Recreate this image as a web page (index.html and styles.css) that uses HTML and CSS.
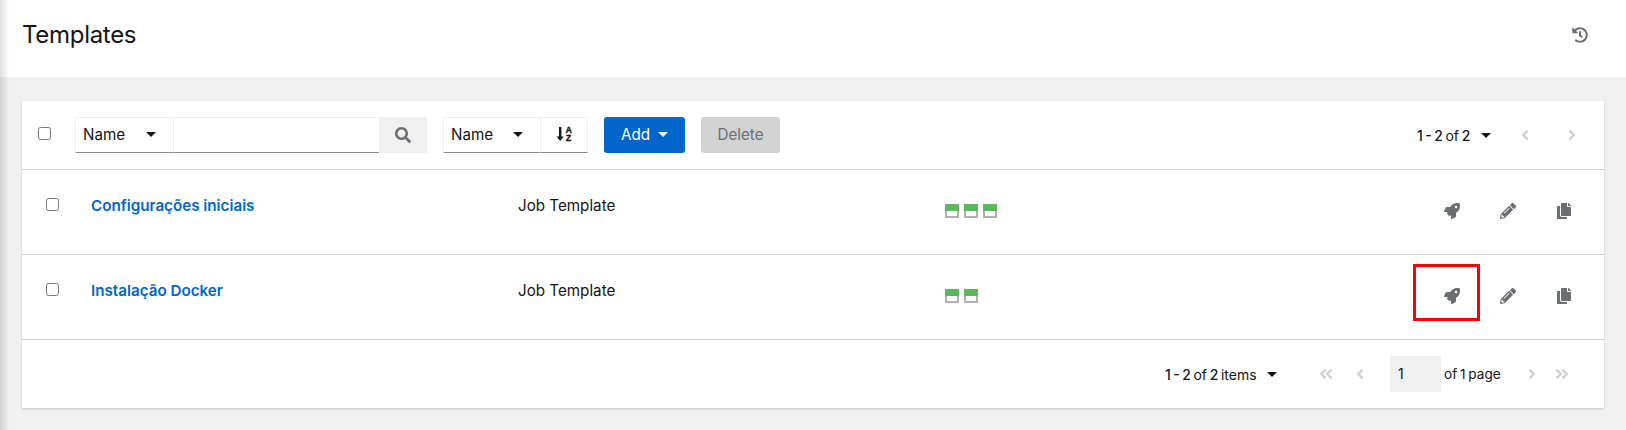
FILE: index.html
```html
<!DOCTYPE html>
<html lang="en">
<head>
<meta charset="utf-8">
<title>Templates</title>
<link rel="stylesheet" href="styles.css">
</head>
<body>
<svg class="defs" width="0" height="0" aria-hidden="true">
  <symbol id="i-rocket" viewBox="0 0 512 512"><path d="M505.12 19.09c-1.19-5.53-6.66-11-12.21-12.19C460.72 0 435.51 0 410.41 0 307.18 0 245.27 55.2 199.05 128H94.84c-16.35.02-35.56 11.88-42.89 26.48L2.52 253.3A28.4 28.4 0 0 0 0 264a24 24 0 0 0 24 24h103.81l-22.47 22.47c-11.37 11.36-13 32.26 0 45.25l50.9 50.91c11.16 11.19 32.16 13.16 45.28 0L224 384.16V488a24 24 0 0 0 24 24 28.56 28.56 0 0 0 10.71-2.52l98.73-49.39c14.63-7.3 26.51-26.5 26.51-42.86V312.8c72.6-46.31 128.03-108.41 128.03-211.1.1-25.2.1-50.4-6.86-82.61zM384.04 168a40 40 0 1 1 40.01-40 40.02 40.02 0 0 1-40.01 40z"/></symbol>
  <symbol id="i-pencil" viewBox="0 0 512 512"><path d="M497.9 142.1l-46.1 46.1c-4.7 4.7-12.3 4.7-17 0l-111-111c-4.7-4.7-4.7-12.3 0-17l46.1-46.1c18.7-18.7 49.1-18.7 67.9 0l60.1 60.1c18.8 18.7 18.8 49.1 0 67.9zM284.2 99.8L21.6 362.4.4 483.9c-2.9 16.4 11.4 30.6 27.8 27.8l121.5-21.3 262.6-262.6c4.7-4.7 4.7-12.3 0-17l-111-111c-4.8-4.7-12.4-4.7-17.1 0zM124.1 339.9c-5.5-5.5-5.5-14.3 0-19.8l154-154c5.5-5.5 14.3-5.5 19.8 0s5.5 14.3 0 19.8l-154 154c-5.5 5.5-14.3 5.5-19.8 0zM88 424h48v36.3l-64.5 11.3-31.1-31.1L51.7 376H88v48z"/></symbol>
  <symbol id="i-copy" viewBox="0 0 448 512"><path d="M320 448v40c0 13.255-10.745 24-24 24H24c-13.255 0-24-10.745-24-24V120c0-13.255 10.745-24 24-24h72v296c0 30.879 25.121 56 56 56h168zm0-344V0H152c-13.255 0-24 10.745-24 24v368c0 13.255 10.745 24 24 24h272c13.255 0 24-10.745 24-24V128H344c-13.2 0-24-10.8-24-24zm120.971-31.029L375.029 7.029A24 24 0 0 0 358.059 0H352v96h96v-6.059a24 24 0 0 0-7.029-16.97z"/></symbol>
  <symbol id="i-search" viewBox="0 0 512 512"><path d="M505 442.7L405.3 343c-4.5-4.5-10.6-7-17-7H372c27.6-35.3 44-79.7 44-128C416 93.1 322.9 0 208 0S0 93.1 0 208s93.1 208 208 208c48.3 0 92.7-16.4 128-44v16.3c0 6.4 2.5 12.5 7 17l99.7 99.7c9.4 9.4 24.6 9.4 33.9 0l28.3-28.3c9.4-9.4 9.4-24.6.1-34zM208 336c-70.7 0-128-57.2-128-128 0-70.7 57.2-128 128-128 70.7 0 128 57.2 128 128 0 70.7-57.2 128-128 128z"/></symbol>
  <symbol id="i-history" viewBox="0 0 512 512"><path d="M504 255.531c.253 136.64-111.18 248.372-247.82 248.468-59.015.042-113.223-20.53-155.822-54.911-11.077-8.94-11.905-25.541-1.839-35.607l11.267-11.267c8.609-8.609 22.353-9.551 31.891-1.984C173.062 425.135 212.781 440 256 440c101.705 0 184-82.311 184-184 0-101.705-82.311-184-184-184-48.814 0-93.149 18.969-126.068 49.932l50.754 50.754c10.08 10.08 2.941 27.314-11.313 27.314H24c-8.837 0-16-7.163-16-16V38.627c0-14.254 17.234-21.393 27.314-11.314l49.372 49.372C129.209 34.136 189.552 8 256 8c136.81 0 247.747 110.78 248 247.531zm-180.912 78.784l9.823-12.63c8.138-10.463 6.253-25.542-4.21-33.679L288 256.349V152c0-13.255-10.745-24-24-24h-16c-13.255 0-24 10.745-24 24v135.651l65.409 50.874c10.463 8.137 25.541 6.253 33.679-4.21z"/></symbol>
  <symbol id="i-left" viewBox="0 0 256 512"><path d="M31.7 239l136-136c9.4-9.4 24.6-9.4 33.9 0l22.6 22.6c9.4 9.4 9.4 24.6 0 33.9L127.9 256l96.4 96.4c9.4 9.4 9.4 24.6 0 33.9L201.7 409c-9.4 9.4-24.6 9.4-33.9 0l-136-136c-9.5-9.4-9.5-24.6-.1-34z"/></symbol>
  <symbol id="i-right" viewBox="0 0 256 512"><path d="M224.3 273l-136 136c-9.4 9.4-24.6 9.4-33.9 0l-22.6-22.6c-9.4-9.4-9.4-24.6 0-33.9l96.4-96.4-96.4-96.4c-9.4-9.4-9.4-24.6 0-33.9L54.3 103c9.4-9.4 24.6-9.4 33.9 0l136 136c9.5 9.4 9.5 24.6.1 34z"/></symbol>
  <symbol id="i-dleft" viewBox="0 0 448 512"><path d="M223.7 239l136-136c9.4-9.4 24.6-9.4 33.9 0l22.6 22.6c9.4 9.4 9.4 24.6 0 33.9L319.9 256l96.4 96.4c9.4 9.4 9.4 24.6 0 33.9L393.7 409c-9.4 9.4-24.6 9.4-33.9 0l-136-136c-9.5-9.4-9.5-24.6-.1-34zM31.7 239l136-136c9.4-9.4 24.6-9.4 33.9 0l22.6 22.6c9.4 9.4 9.4 24.6 0 33.9L127.9 256l96.4 96.4c9.4 9.4 9.4 24.6 0 33.9L201.7 409c-9.4 9.4-24.6 9.4-33.9 0l-136-136c-9.5-9.4-9.5-24.6-.1-34z"/></symbol>
  <symbol id="i-dright" viewBox="0 0 448 512"><path d="M224.3 273l-136 136c-9.4 9.4-24.6 9.4-33.9 0l-22.6-22.6c-9.4-9.4-9.4-24.6 0-33.9l96.4-96.4-96.4-96.4c-9.4-9.4-9.4-24.6 0-33.9L54.3 103c9.4-9.4 24.6-9.4 33.9 0l136 136c9.5 9.4 9.5 24.6.1 34zM416.3 273l-136 136c-9.4 9.4-24.6 9.4-33.9 0l-22.6-22.6c-9.4-9.4-9.4-24.6 0-33.9l96.4-96.4-96.4-96.4c-9.4-9.4-9.4-24.6 0-33.9l22.5-22.7c9.4-9.4 24.6-9.4 33.9 0l136 136c9.5 9.4 9.5 24.6.1 34z"/></symbol>
</svg>
<div class="side-shadow"></div>
<header class="page-header">
  <h1 class="title">Templates</h1>
  <svg class="history"><use href="#i-history"/></svg>
</header>
<main class="content">
  <section class="card">
    <div class="toolbar">
      <input type="checkbox" class="check-all">
      <div class="select sel-search"><span>Name</span><i class="caret"></i></div>
      <div class="search-input"></div>
      <div class="search-btn"><svg class="ic-search"><use href="#i-search"/></svg></div>
      <div class="select sel-sort"><span>Name</span><i class="caret"></i></div>
      <div class="sort-btn">
        <svg class="ic-sort" viewBox="0 0 17 16">
          <path d="M3 1h2.400v9.500h2.400L4.200 15 .6 10.500H3z"/>
          <text x="9.500" y="7" class="sort-letter">A</text>
          <text x="9.800" y="15" class="sort-letter">Z</text>
        </svg>
      </div>
      <button class="btn btn-add">Add<i class="caret caret-white"></i></button>
      <button class="btn btn-delete">Delete</button>
      <div class="top-pager">
        <span class="count count-top"><b>1 - 2</b> of <b>2</b></span><i class="caret"></i>
        <svg class="ang ang-top-l"><use href="#i-left"/></svg>
        <svg class="ang ang-top-r"><use href="#i-right"/></svg>
      </div>
    </div>
    <div class="row">
      <input type="checkbox" class="row-check">
      <a class="name">Configurações iniciais</a>
      <span class="type">Job Template</span>
      <div class="spark"><i class="bar"></i><i class="bar"></i><i class="bar"></i></div>
      <div class="actions">
        <svg class="ic-rocket"><use href="#i-rocket"/></svg>
        <svg class="ic-pencil"><use href="#i-pencil"/></svg>
        <svg class="ic-copy"><use href="#i-copy"/></svg>
      </div>
    </div>
    <div class="row">
      <input type="checkbox" class="row-check">
      <a class="name">Instalação Docker</a>
      <span class="type">Job Template</span>
      <div class="spark"><i class="bar"></i><i class="bar"></i></div>
      <div class="actions">
        <svg class="ic-rocket"><use href="#i-rocket"/></svg>
        <svg class="ic-pencil"><use href="#i-pencil"/></svg>
        <svg class="ic-copy"><use href="#i-copy"/></svg>
        <div class="highlight"></div>
      </div>
    </div>
    <div class="footer">
      <span class="count count-bottom"><b>1 - 2</b> of <b>2</b> items</span><i class="caret"></i>
      <svg class="ang-d ang-first"><use href="#i-dleft"/></svg>
      <svg class="ang ang-prev"><use href="#i-left"/></svg>
      <div class="page-box">1</div>
      <span class="of-page">of 1 page</span>
      <svg class="ang ang-next"><use href="#i-right"/></svg>
      <svg class="ang-d ang-last"><use href="#i-dright"/></svg>
    </div>
  </section>
</main>
</body>
</html>
```
FILE: styles.css
```css
* { box-sizing: border-box; }
html, body { height: 100%; }
body {
  margin: 0;
  background: #f0f0f0;
  font-family: "Inter", "Liberation Sans", sans-serif;
  font-size: 15.2px;
  color: #151515;
  overflow: hidden;
  position: relative;
}
.defs { position: absolute; }
.side-shadow {
  position: absolute;
  left: 0; top: 0; bottom: 0;
  width: 9px;
  background: linear-gradient(to right, rgba(0,0,0,.13), rgba(0,0,0,0));
}
.page-header {
  height: 77px;
  background: #fff;
  display: flex;
  align-items: center;
  justify-content: space-between;
  padding: 0 38px 8px 22px;
}
.title { margin: 0; font-size: 24px; font-weight: 400; color: #151515; letter-spacing: -.3px; }
.history { width: 16px; height: 16px; fill: #6a6e73; }
.content { padding: 24px 22px 0; }
.card {
  position: relative;
  background: #fff;
  box-shadow: 0 1px 2px rgba(3,3,3,.16);
}
.toolbar {
  height: 69px;
  display: flex;
  align-items: center;
  padding: 0 0 0 16px;
  border-bottom: 1px solid #d2d2d2;
}
.check-all { margin: 0 0 4px; width: 13px; height: 13px; flex: none; }
.select {
  height: 36px;
  display: flex;
  align-items: center;
  justify-content: space-between;
  padding: 0 17px 2px 7px;
  border: 1px solid #f0f0f0;
  border-bottom-color: #8a8d90;
  flex: none;
}
.sel-search { margin-left: 24px; width: 99px; }
.sel-sort { margin-left: 16px; width: 98px; }
.search-input {
  width: 205px;
  height: 36px;
  border-top: 1px solid #f0f0f0;
  border-bottom: 1px solid #8a8d90;
  flex: none;
}
.search-btn {
  width: 48px; height: 36px;
  background: #f0f0f0;
  display: flex; align-items: center; justify-content: center;
  flex: none;
}
.ic-search { width: 16px; height: 16px; fill: #6a6e73; }
.sort-btn {
  width: 47px; height: 36px;
  border: 1px solid #f0f0f0;
  border-left: 0;
  border-bottom-color: #8a8d90;
  display: flex; align-items: center; justify-content: center;
  flex: none;
}
.ic-sort { width: 17px; height: 16px; fill: #151515; margin-bottom: 2px; }
.sort-letter { font-size: 9px; font-weight: 700; font-family: "Liberation Sans", sans-serif; stroke: #151515; stroke-width: .3px; }
.caret {
  display: inline-block;
  width: 0; height: 0;
  border-left: 5px solid transparent;
  border-right: 5px solid transparent;
  border-top: 5.500px solid #151515;
  flex: none;
}
.caret-white { border-top-color: #fff; margin-left: 8px; }
.btn {
  height: 36px;
  border: 0;
  border-radius: 3px;
  font: inherit;
  padding: 0 0 2px;
  flex: none;
  display: flex; align-items: center; justify-content: center;
}
.btn-add { width: 81px; margin-left: 16px; background: #06c; color: #fff; }
.btn-delete { width: 79px; margin-left: 16px; background: #d2d2d2; color: #6a6e73; }
.top-pager { margin-left: auto; display: flex; align-items: center; }
.count {
  color: #151515;
  font-size: 14px;
  word-spacing: -1.300px;
  white-space: nowrap;
  flex: none;
}
.count b { font-weight: 500; }
.count-top { width: 64px; }
.count-bottom { width: 102px; }
.ang { width: 8px; height: 16px; fill: #d2d2d2; flex: none; }
.ang-d { width: 14px; height: 16px; fill: #d2d2d2; flex: none; }
.ang-top-l { margin-left: 30px; }
.ang-top-r { margin-left: 39px; margin-right: 28px; }
.row {
  height: 85px;
  padding: 0 0 2px 24px;
  display: flex;
  align-items: center;
  border-bottom: 1px solid #d2d2d2;
}
.row-check { margin: 0 0 13px; width: 13px; height: 13px; flex: none; }
.name {
  width: 427px;
  margin-left: 32px;
  color: #06c;
  font-weight: 600;
  flex: none;
  padding-bottom: 12px;
}
.type { width: 427px; flex: none; padding-bottom: 12px; }
.spark { display: flex; gap: 5px; flex: none; }
.bar {
  display: block;
  width: 14px; height: 14px;
  background:
    linear-gradient(#5cb85c, #5cb85c) 0 0 / 14px 7px no-repeat,
    linear-gradient(#fff, #fff) 2px 7px / 10px 5px no-repeat,
    #b0b0b0;
}
.actions {
  margin-left: auto;
  display: flex;
  align-items: center;
  position: relative;
  padding-right: 33px;
}
.ic-rocket { width: 16px; height: 16px; fill: #6a6e73; }
.ic-pencil { width: 16px; height: 16px; fill: #6a6e73; margin-left: 40px; }
.ic-copy { width: 14px; height: 16px; fill: #6a6e73; margin-left: 41px; }
.highlight {
  position: absolute;
  left: -31px; top: -24px;
  width: 67px; height: 57px;
  border: 3px solid #f00;
}
.footer {
  height: 68px;
  display: flex;
  align-items: center;
  padding: 0 0 0 1143px;
}
.ang-first { margin-left: 42px; }
.ang-prev { margin-left: 23px; }
.page-box {
  width: 51px; height: 36px;
  margin-left: 26px;
  background: #f0f0f0;
  padding: 0 8px;
  font-size: 14px;
  line-height: 36px;
  flex: none;
}
.of-page { margin-left: 3px; width: 57px; white-space: nowrap; font-size: 13.6px; word-spacing: -1px; flex: none; }
.ang-next { margin-left: 27px; }
.ang-last { margin-left: 19px; }
```
